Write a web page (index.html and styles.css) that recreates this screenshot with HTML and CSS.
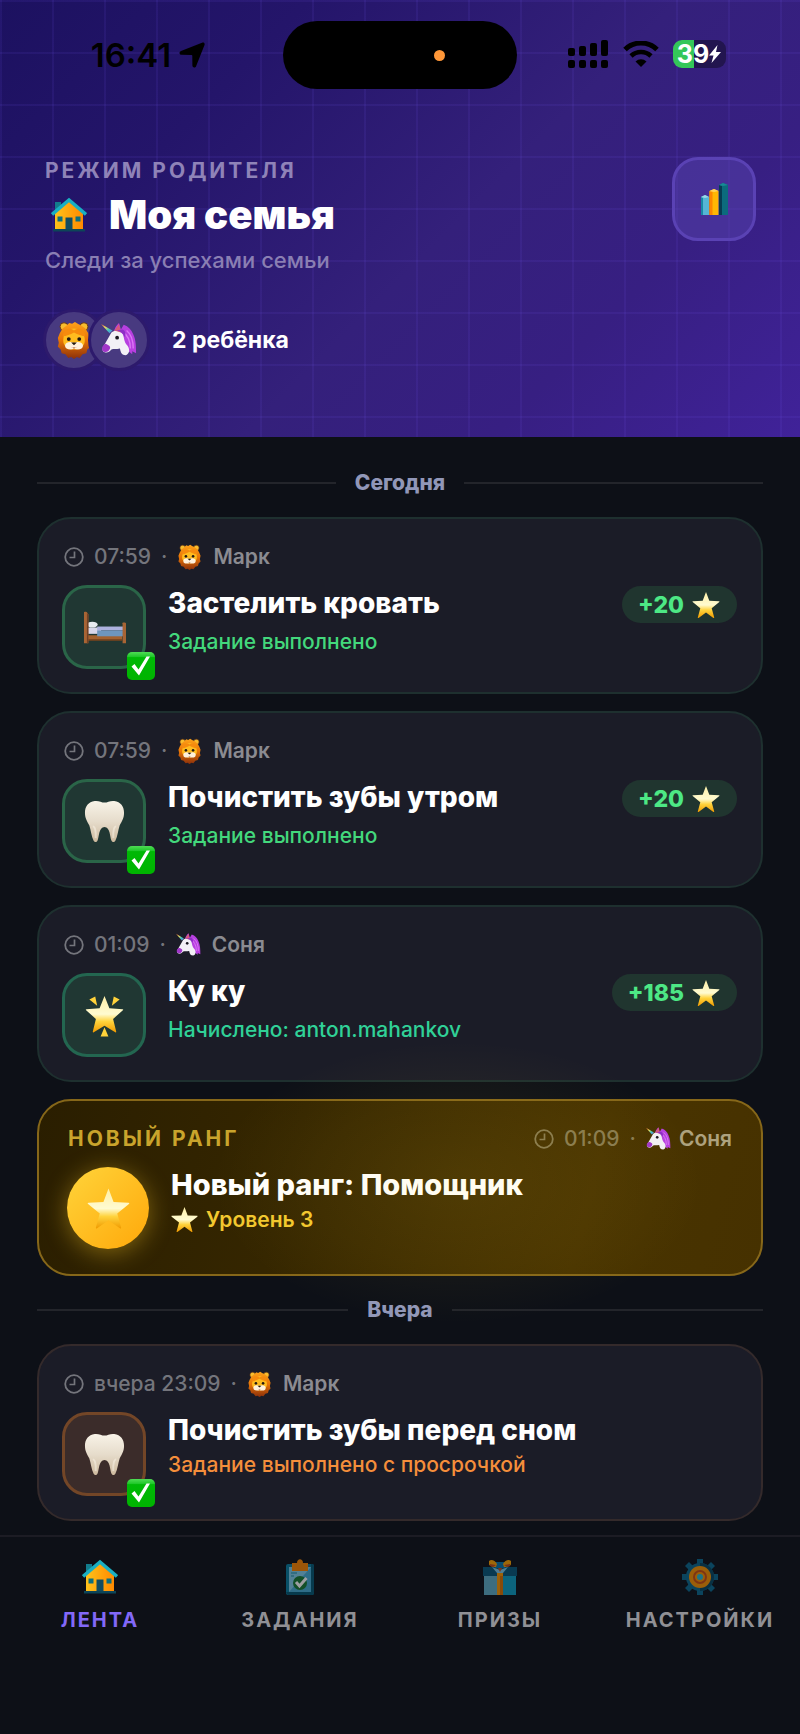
FILE: index.html
```html
<!DOCTYPE html>
<html lang="ru">
<head>
  <meta charset="UTF-8" />
  <meta name="viewport" content="width=device-width, initial-scale=1.0"/>
  <title>Моя семья</title>
  <link rel="stylesheet" href="styles.css">
</head>
<body>
  <svg class="sprite" aria-hidden="true">
    <defs>
      <linearGradient id="g-house" x1="0" y1="0" x2="1" y2="0">
        <stop offset="0" stop-color="#ffc21a"/><stop offset="1" stop-color="#ff8a00"/>
      </linearGradient>
      <linearGradient id="g-star" x1="0" y1="0" x2="0" y2="1">
        <stop offset="0" stop-color="#fff0a8"/><stop offset=".5" stop-color="#fffbd0"/><stop offset=".7" stop-color="#ffd33c"/><stop offset="1" stop-color="#f09a00"/>
      </linearGradient>
      <linearGradient id="g-tooth" x1="0" y1="0" x2="0" y2="1">
        <stop offset="0" stop-color="#f8f3e8"/><stop offset=".5" stop-color="#e6dccb"/><stop offset="1" stop-color="#cdb99d"/>
      </linearGradient>
      <linearGradient id="g-mane" x1="0" y1="0" x2="0" y2="1">
        <stop offset="0" stop-color="#ffa31a"/><stop offset=".5" stop-color="#e87506"/><stop offset="1" stop-color="#8a2f0b"/>
      </linearGradient>
      <linearGradient id="g-horn" x1="0" y1="0" x2="1" y2="1">
        <stop offset="0" stop-color="#e05a3c"/><stop offset=".35" stop-color="#f7dc5a"/><stop offset=".65" stop-color="#3fc8c0"/><stop offset="1" stop-color="#6a6ff0"/>
      </linearGradient>
      <linearGradient id="g-check" x1="0" y1="0" x2="0" y2="1">
        <stop offset="0" stop-color="#4fdc55"/><stop offset=".16" stop-color="#22c92c"/><stop offset=".2" stop-color="#00b806"/><stop offset="1" stop-color="#00b400"/>
      </linearGradient>
    </defs>

    <symbol id="house" viewBox="0 0 36 36">
      <path d="M4 5h6v8l-6 4z" fill="#127c8c"/>
      <path d="M4 16 18 3l14 13v16H4z" fill="url(#g-house)"/>
      <path d="M1 17.500 18 3l17 14.500" fill="none" stroke="#19afc2" stroke-width="3.600"/>
      <path d="M6.500 19.500h5v5h-5zM24.500 19.500h5v5h-5z" fill="#0c6f7e"/>
      <path d="M14.500 20.500h7V32h-7z" fill="#124c61"/>
      <path d="M2 32h32v2.500H2z" fill="#0d4558"/>
    </symbol>

    <symbol id="star" viewBox="0 0 28 28">
      <path d="M14 1 17.300 9.800l9.700.4c.6.100.7.500.3.900l-7.600 6.100 2.500 9.200c.1.500-.3.800-.8.500L14 21.600l-7.400 5.300c-.5.300-.9 0-.8-.5l2.500-9.200-7.600-6.100c-.4-.4-.3-.8.3-.9l9.700-.4z" fill="url(#g-star)"/>
    </symbol>

    <symbol id="glow-star" viewBox="0 0 40 44">
      <path d="M20 2 25 14.500l13.500 1c.7.100.9.700.3 1.200L28.800 25.500l3.200 13c.1.700-.4 1-1 .6L20 32.500 9 39.100c-.6.400-1.100.1-1-.6l3.200-13L1.200 16.700c-.6-.5-.4-1.100.3-1.200l13.500-1z" fill="url(#g-star)"/>
      <path d="M4.500 5.500 10.500 2.500l2 9.500zM35.500 5.500 29.500 2.500l-2 9.500zM20 34l4 9.500h-8z" fill="#ffd23a"/>
    </symbol>

    <symbol id="tooth" viewBox="0 0 42 44">
      <path d="M11 1c4-.6 7 1.600 10 1.600S27 .4 31 1c6.500 1 10 5.500 10 12 0 6-2.500 9-4.500 13-1.600 5-2 11-4.500 16-.8 1.500-3 1.500-3.800-.2C26.500 38 27 27.500 21 27.500S15.500 38 13.800 41.800c-.8 1.700-3 1.700-3.800.2-2.500-5-2.900-11-4.500-16C3.500 22 1 19 1 13 1 6.500 4.500 2 11 1z" fill="url(#g-tooth)"/>
      <path d="M9 27c2 0 3.500 4 3 12M33 27c-2 0-3.500 4-3 12" fill="none" stroke="#fffaf0" stroke-width="2" opacity=".45"/>
    </symbol>

    <symbol id="bed" viewBox="0 0 44 34">
      <path d="M5 25h35v5H5z" fill="#a4622f"/>
      <path d="M5 29h35v1.500H5z" fill="#70401d"/>
      <path d="M4.500 17h14v6.500h-14z" fill="#d8d7ea"/>
      <ellipse cx="9.500" cy="14" rx="5.500" ry="3" fill="#e8ebf0"/>
      <path d="M14.500 16H41v4H14.500z" fill="#adb1de"/>
      <path d="M14.500 20H41v6H14.500z" fill="#6e96bd"/>
      <path d="M1 1.500c0-.8 3-.8 3 0l1.500 2V33H1zM40 13c0-1.500 4-1.500 4 0v20h-3.500V13z" fill="#a86434"/>
      <path d="M4 2l1.500 1.500V33H4z" fill="#704025"/>
    </symbol>

    <symbol id="lion" viewBox="0 0 36 40">
      <circle cx="7.500" cy="6" r="4.200" fill="#f8bd2e" stroke="#673715" stroke-width="1"/>
      <circle cx="28.500" cy="6" r="4.200" fill="#f8bd2e" stroke="#673715" stroke-width="1"/>
      <path d="M10 5l3-3 3 1 3-2 3 2 4 2 4 3 3 5 2 5-1 5 1 4-3 3-1 4-4 1-3 4-3-1-3 2-3-2-3 1-3-4-4-1-1-4-3-3 1-4-1-5 2-5 3-5z" fill="url(#g-mane)"/>
      <path d="M7 17c1-6 5-9 11-9s10 3 11 9c1 5 0 8-3 10s-5 3-8 3-5-1-8-3-4-5-3-10z" fill="#ffbc1f"/>
      <path d="M6 16C7 9 13 6 18 10c5-4 11-1 12 6-4 0-8-2-12-4-4 2-8 4-12 4z" fill="#f68b0e"/>
      <ellipse cx="14" cy="26" rx="5.500" ry="4" fill="#fff1dc"/>
      <ellipse cx="22" cy="26" rx="5.500" ry="4" fill="#fff1dc"/>
      <circle cx="12.500" cy="19" r="2" fill="#211813"/>
      <circle cx="23.500" cy="19" r="2" fill="#211813"/>
      <path d="M15 22.500h6L18 25.500z" fill="#211813"/>
      <path d="M14.500 27c1.500 1.300 5.500 1.300 7 0L18 29z" fill="#94402b"/>
    </symbol>

    <symbol id="unicorn" viewBox="0 0 38 36">
      <path d="M14 8c1-4 3-6 5-8l2 7 3-5c5 2 8 5 10 10 3 6 3 14 3 20l-4-2v3l-5-4-8-8z" fill="#b73fe0"/>
      <path d="M22 9c5 3 9 9 9 18M27 8c5 4 7 11 7 19" fill="none" stroke="#d877f5" stroke-width="1.500"/>
      <path d="M11 10c4-3 9-2 12 2 2 5 1 8 5 12 3 4 2 9-2 10-4 0-5-2-6-7-4 1-7 0-9 1-2 2-4 4-7 3s-3-4-1-7l8-14z" fill="#f2f0f6"/>
      <path d="M4.500 22c-3 2-4 4-3 7C4 32 8 31 9.500 27 10.500 24 7 23 4.500 22z" fill="#a136c9"/>
      <path d="M0 1l12 7-3 3z" fill="url(#g-horn)"/>
      <path d="M14 8l5-7 2 9z" fill="#d4597a"/>
      <circle cx="17" cy="15.500" r="2" fill="#191720"/>
      <path d="M15 8c4 0 8 2 10 7 2-4 0-7-2-8z" fill="#8d2fc6"/>
    </symbol>

    <symbol id="check" viewBox="0 0 28 28">
      <rect width="28" height="28" rx="5" fill="url(#g-check)"/>
      <path d="M4.500 14.500 7.500 12l4 5.500L19.500 4.500h3.500L12 23.500z" fill="#fff"/>
    </symbol>

    <symbol id="clock" viewBox="0 0 20 20">
      <circle cx="10" cy="10" r="8.800" fill="none" stroke="currentColor" stroke-width="1.800"/>
      <path d="M10.500 4.500v6h-5" fill="none" stroke="currentColor" stroke-width="1.700"/>
    </symbol>
  </svg>

  <header class="hero">
    <div class="status-bar">
      <div class="status-left">
        <span class="time">16:41</span>
        <svg class="arrow" viewBox="0 0 26 26"><path d="M23 .8c1.800-.7 3.100.5 2.500 2.300L17.200 24c-.8 2.200-3.700 2-3.800-.4l-.1-9.600c0-.8-.3-1.100-1.100-1.100L2.500 12.800C.1 12.600-.2 9.800 2 8.900z" fill="#000"/></svg>
      </div>
      <div class="island"><span class="mic-dot"></span></div>
      <div class="status-right">
        <svg class="signal" viewBox="0 0 41 28">
          <rect x="0" y="8" width="7" height="8" rx="2"/><rect x="11" y="6" width="7" height="10" rx="2"/><rect x="22" y="3" width="7" height="13" rx="2"/><rect x="33" y="0" width="7" height="16" rx="2"/>
          <rect x="0" y="20" width="7" height="8" rx="2"/><rect x="11" y="20" width="7" height="8" rx="2"/><rect x="22" y="20" width="7" height="8" rx="2"/><rect x="33" y="20" width="7" height="8" rx="2"/>
        </svg>
        <svg class="wifi" viewBox="0 0 36 26">
          <path d="M2 8.500a23 23 0 0 1 32 0" fill="none" stroke="#000" stroke-width="5"/>
          <path d="M8 15a14.500 14.500 0 0 1 20 0" fill="none" stroke="#000" stroke-width="4.600"/>
          <path d="M12.500 20.500a8 8 0 0 1 11 0L18 26z"/>
        </svg>
        <div class="battery">
          <span class="battery-level">39</span>
          <svg class="bolt" viewBox="0 0 12 18"><path d="M8.500 0 0 10.500h4.500L2.500 18 12 7H7z" fill="#fff"/></svg>
        </div>
      </div>
    </div>

    <div class="hero-content">
      <div>
        <p class="eyebrow">РЕЖИМ РОДИТЕЛЯ</p>
        <h1><svg class="icon-36"><use href="#house"/></svg>Моя семья</h1>
        <p class="hero-sub">Следи за успехами семьи</p>
        <div class="kids">
          <span class="avatar"><svg class="avatar-icon"><use href="#lion"/></svg></span>
          <span class="avatar"><svg class="avatar-icon"><use href="#unicorn"/></svg></span>
          <span class="kids-count">2 ребёнка</span>
        </div>
      </div>
      <button type="button" class="stats-btn" aria-label="Статистика">
        <svg class="stats-icon" viewBox="0 0 28 33">
          <path d="M1 14l4-2 4 2v18H1z" fill="#55b5d5"/><path d="M1 14l2 1v17H1z" fill="#178aa5"/><path d="M1 14l4-2 4 2-4 1z" fill="#9bd7e5"/>
          <path d="M9.500 8l4.500-2 4.500 2v24h-9z" fill="#ffb703"/><path d="M9.500 8l3 1v23h-3z" fill="#fb8500"/><path d="M9.500 8l4.500-2 4.500 2-4.500 1z" fill="#ffd35c"/>
          <path d="M19 2l4-2 5 2v30h-9z" fill="#0c6b7d"/><path d="M19 2l3 1v29h-3z" fill="#073b51"/><path d="M19 2l4-2 5 2-5 1z" fill="#178a94"/>
        </svg>
      </button>
    </div>
  </header>

  <main class="feed">
    <h2 class="day">Сегодня</h2>

    <article class="card done">
      <div class="meta">
        <svg class="clock"><use href="#clock"/></svg><span>07:59</span><span class="dot">·</span>
        <svg class="meta-icon"><use href="#lion"/></svg><b>Марк</b>
      </div>
      <div class="card-row">
        <div class="tile">
          <svg class="tile-icon"><use href="#bed"/></svg>
          <svg class="check"><use href="#check"/></svg>
        </div>
        <div class="card-body">
          <div class="title-row">
            <h3>Застелить кровать</h3>
            <span class="points">+20 <svg class="points-star"><use href="#star"/></svg></span>
          </div>
          <p class="note">Задание выполнено</p>
        </div>
      </div>
    </article>

    <article class="card done">
      <div class="meta">
        <svg class="clock"><use href="#clock"/></svg><span>07:59</span><span class="dot">·</span>
        <svg class="meta-icon"><use href="#lion"/></svg><b>Марк</b>
      </div>
      <div class="card-row">
        <div class="tile">
          <svg class="tile-icon"><use href="#tooth"/></svg>
          <svg class="check"><use href="#check"/></svg>
        </div>
        <div class="card-body">
          <div class="title-row">
            <h3>Почистить зубы утром</h3>
            <span class="points">+20 <svg class="points-star"><use href="#star"/></svg></span>
          </div>
          <p class="note">Задание выполнено</p>
        </div>
      </div>
    </article>

    <article class="card bonus">
      <div class="meta">
        <svg class="clock"><use href="#clock"/></svg><span>01:09</span><span class="dot">·</span>
        <svg class="meta-icon"><use href="#unicorn"/></svg><b>Соня</b>
      </div>
      <div class="card-row">
        <div class="tile">
          <svg class="tile-icon"><use href="#glow-star"/></svg>
        </div>
        <div class="card-body">
          <div class="title-row">
            <h3>Ку ку</h3>
            <span class="points">+185 <svg class="points-star"><use href="#star"/></svg></span>
          </div>
          <p class="note">Начислено: anton.mahankov</p>
        </div>
      </div>
    </article>

    <article class="card rank">
      <div class="rank-top">
        <p class="rank-label">НОВЫЙ РАНГ</p>
        <div class="meta">
          <svg class="clock"><use href="#clock"/></svg><span>01:09</span><span class="dot">·</span>
          <svg class="meta-icon"><use href="#unicorn"/></svg><b>Соня</b>
        </div>
      </div>
      <div class="card-row">
        <div class="medal"><svg class="tile-icon"><use href="#star"/></svg></div>
        <div class="card-body">
          <h3>Новый ранг: Помощник</h3>
          <p class="note"><svg class="note-star"><use href="#star"/></svg>Уровень 3</p>
        </div>
      </div>
    </article>

    <h2 class="day">Вчера</h2>

    <article class="card late">
      <div class="meta">
        <svg class="clock"><use href="#clock"/></svg><span>вчера 23:09</span><span class="dot">·</span>
        <svg class="meta-icon"><use href="#lion"/></svg><b>Марк</b>
      </div>
      <div class="card-row">
        <div class="tile">
          <svg class="tile-icon"><use href="#tooth"/></svg>
          <svg class="check"><use href="#check"/></svg>
        </div>
        <div class="card-body">
          <h3>Почистить зубы перед сном</h3>
          <p class="note">Задание выполнено с просрочкой</p>
        </div>
      </div>
    </article>
  </main>

  <nav class="tabs">
    <a href="#feed" class="tab active">
      <svg class="icon-36"><use href="#house"/></svg>
      <span>ЛЕНТА</span>
    </a>
    <a href="#tasks" class="tab">
      <svg class="icon-36" viewBox="0 0 36 36">
        <rect x="4" y="5" width="28" height="31" rx="2" fill="#087b9e"/>
        <path d="M29 5h1a2 2 0 0 1 2 2v27a2 2 0 0 1-2 2H6l-2-3h25z" fill="#045672"/>
        <rect x="7" y="8" width="22" height="25" fill="#83cdeb"/>
        <path d="M29 8v25H7z" fill="#46abd4"/>
        <path d="M9 14h6M9 17h3" stroke="#168da7"/>
        <path d="M10 4h5c0-5 6-5 6 0h5v8H10z" fill="#fb8500"/>
        <circle cx="18" cy="24" r="7" fill="#177a34"/>
        <path d="M14 23l3.500 4 7-8" fill="none" stroke="#fff" stroke-width="3"/>
      </svg>
      <span>ЗАДАНИЯ</span>
    </a>
    <a href="#prizes" class="tab">
      <svg class="icon-36" viewBox="0 0 36 36">
        <path d="M2 16h32v20H2z" fill="#5dabc5"/>
        <path d="M21 16h13v20H21z" fill="#0c9dc1"/>
        <path d="M1 8h34v9H1z" fill="#075779"/>
        <path d="M13 3h10v6H13z" fill="#0875ab"/>
        <path d="M10 8l8 3 8-3-5 6h-6z" fill="#7bc6e4"/>
        <path d="M15 14h6v22h-6z" fill="#fb9700"/><path d="M18 17h3v19h-3z" fill="#db7100"/>
        <path d="M7 2c2-2 6-1 8 3l-1 3c-4 0-7-1-7-3zM29 2c-2-2-6-1-8 3l1 3c4 0 7-1 7-3z" fill="#ffa300"/>
        <path d="M8 5l6 1-3 2-3-1zM28 5l-6 1 3 2 3-1zM16 9h4l-2 4z" fill="#c54a18"/>
      </svg>
      <span>ПРИЗЫ</span>
    </a>
    <a href="#settings" class="tab">
      <svg class="icon-36" viewBox="0 0 36 36">
        <path d="M15 0h6v5h-6zM15 31h6v5h-6zM0 15h5v6H0zM31 15h5v6h-5zM3 7l4-4 4 4-4 4zM25 7l4-4 4 4-4 4zM3 29l4-4 4 4-4 4zM25 29l4-4 4 4-4 4z" fill="#0a688d"/>
        <circle cx="18" cy="18" r="14" fill="#0a688d"/>
        <path d="M18 4a14 14 0 0 1 0 28z" fill="#064660"/>
        <circle cx="18" cy="18" r="11" fill="#f89300"/>
        <circle cx="18" cy="18" r="6" fill="#f89300" stroke="#c94d12" stroke-width="2"/>
        <circle cx="18" cy="18" r="3" fill="#28b7d4"/>
      </svg>
      <span>НАСТРОЙКИ</span>
    </a>
  </nav>
</body>
</html>
```
FILE: styles.css
```css
* {
  box-sizing: border-box;
  margin: 0;
  padding: 0;
}

body {
  background-color: #0d1017;
  color: #ffffff;
  font-family: Inter, 'Liberation Sans', sans-serif;
  font-size: 21px;
  line-height: 24px;
  min-height: 100vh;
  display: flex;
  flex-direction: column;
}

svg {
  display: block;
  flex-shrink: 0;
}

.sprite {
  position: absolute;
  width: 0;
  height: 0;
}

.icon-36 {
  width: 36px;
  height: 36px;
}

/* header */
.hero {
  background-image:
    linear-gradient(rgba(124, 92, 255, 0.09) 2px, transparent 2px),
    linear-gradient(90deg, rgba(124, 92, 255, 0.09) 2px, transparent 2px),
    linear-gradient(135deg, #1c1160 0%, #24156a 25%, #34207b 55%, #371f82 75%, #402299 100%);
  background-size: 52px 52px, 52px 52px, 100% 100%;
}

.status-bar {
  display: grid;
  grid-template-columns: 1fr 234px 1fr;
  align-items: center;
  padding-top: 21px;
}

.status-left,
.status-right {
  display: flex;
  align-items: center;
  justify-content: center;
}

.status-left {
  gap: 8px;
  padding-left: 13px;
}

.status-right {
  gap: 14px;
  padding-right: 24px;
  padding-bottom: 2px;
}

.time {
  color: #000000;
  font-size: 33px;
  font-weight: 600;
}

.arrow {
  width: 26px;
  height: 26px;
}

.island {
  display: flex;
  align-items: center;
  justify-content: flex-end;
  height: 68px;
  padding-right: 72px;
  border-radius: 34px;
  background-color: #000000;
}

.mic-dot {
  width: 11px;
  height: 11px;
  border-radius: 50%;
  background-color: #ff9738;
}

.signal {
  width: 41px;
  height: 28px;
}

.wifi {
  width: 36px;
  height: 26px;
}

.battery {
  display: flex;
  align-items: center;
  justify-content: center;
  width: 53px;
  height: 28px;
  border-radius: 9px;
  background: linear-gradient(90deg, #34c759 39%, #22154f 39%);
}

.battery-level {
  font-size: 25px;
  font-weight: 700;
}

.bolt {
  width: 12px;
  height: 18px;
}

.hero-content {
  display: flex;
  align-items: flex-start;
  justify-content: space-between;
  padding: 68px 44px 66px 45px;
}

.eyebrow {
  color: #8f83b8;
  font-weight: 700;
  line-height: 28px;
  letter-spacing: 3px;
}

h1 {
  display: flex;
  align-items: center;
  gap: 22px;
  margin-top: 5px;
  padding-left: 6px;
  font-size: 40px;
  font-weight: 900;
  line-height: 50px;
}

.hero-sub {
  margin-top: 6px;
  color: #8a7fb3;
  font-size: 22px;
  font-weight: 500;
  line-height: 28px;
}

.kids {
  display: flex;
  align-items: center;
  margin-top: 35px;
}

.avatar {
  display: flex;
  align-items: center;
  justify-content: center;
  width: 62px;
  height: 62px;
  margin-left: -2px;
  border: 3px solid #2d1a6c;
  border-radius: 50%;
  background-color: #483a80;
}

.avatar + .avatar {
  margin-left: -17px;
}

.avatar-icon {
  width: 36px;
  height: 38px;
}

.kids-count {
  margin-left: 22px;
  font-size: 23px;
  font-weight: 700;
}

.stats-btn {
  display: flex;
  align-items: center;
  justify-content: center;
  width: 84px;
  height: 84px;
  border: 3px solid #5a42b4;
  border-radius: 26px;
  background-color: rgba(92, 70, 180, 0.45);
  cursor: pointer;
}

.stats-icon {
  width: 28px;
  height: 33px;
}

/* feed */
.feed {
  flex: 1;
  padding: 34px 37px 14px;
}

.day {
  display: flex;
  align-items: center;
  gap: 19px;
  margin-bottom: 22px;
  color: #9197b8;
  font-size: 21px;
  font-weight: 800;
}

.day::before,
.day::after {
  content: "";
  flex: 1;
  height: 2px;
  background-color: #23252b;
}

.card + .day {
  margin-top: 22px;
}

.card {
  padding: 24px 24px 23px 23px;
  border: 2px solid #1e302f;
  border-radius: 34px;
  background-color: #1b1c27;
}

.card + .card {
  margin-top: 17px;
}

.meta {
  display: flex;
  align-items: center;
  height: 28px;
  padding-left: 2px;
  color: #74757c;
  font-weight: 500;
}

.meta b {
  margin-left: 11px;
  color: #8b8b91;
  font-weight: 600;
}

.clock {
  width: 20px;
  height: 20px;
  margin-right: 10px;
}

.dot {
  margin: 0 10px;
}

.meta-icon {
  width: 25px;
  height: 26px;
}

.card-row {
  display: flex;
  align-items: flex-start;
  gap: 22px;
  margin-top: 14px;
}

.tile {
  position: relative;
  display: flex;
  align-items: center;
  justify-content: center;
  width: 84px;
  height: 84px;
  border: 3px solid #2a6548;
  border-radius: 25px;
  background-color: #203733;
}

.tile-icon {
  width: 43px;
  height: 43px;
}

.check {
  position: absolute;
  right: -12px;
  bottom: -14px;
  width: 28px;
  height: 28px;
}

.card-body {
  flex: 1;
  padding-top: 2px;
}

.title-row {
  display: flex;
  align-items: flex-start;
  justify-content: space-between;
}

h3 {
  font-size: 28px;
  font-weight: 800;
  line-height: 32px;
}

.points {
  display: flex;
  align-items: center;
  gap: 8px;
  height: 37px;
  padding: 0 17px 0 16px;
  border-radius: 19px;
  background-color: #20352f;
  color: #4de885;
  font-size: 23px;
  font-weight: 800;
}

.points-star {
  width: 28px;
  height: 28px;
}

.note {
  display: flex;
  align-items: center;
  gap: 8px;
  margin-top: 7px;
  color: #43d87c;
  font-weight: 500;
}

.note-star {
  width: 27px;
  height: 27px;
}

.title-row .points {
  margin-top: -1px;
}

.bonus .tile {
  border-color: #236650;
}

.bonus .note {
  color: #30d197;
}

.late {
  border-color: #342a2b;
}

.late .tile {
  border-color: #734627;
  background-color: #3b2c2a;
}

.late .note {
  color: #f58e3b;
}

/* rank card */
.rank {
  position: relative;
  border-color: #866719;
  background: linear-gradient(105deg, #2a1e00 0%, #352600 35%, #493400 75%, #463100 100%);
}

.rank::after {
  content: "";
  position: absolute;
  left: 24%;
  right: 8%;
  top: -60px;
  bottom: -50px;
  background: radial-gradient(closest-side, rgba(255, 215, 50, 0.08), rgba(255, 215, 50, 0.04) 60%, transparent);
  pointer-events: none;
}

.rank-top {
  display: flex;
  align-items: center;
  justify-content: space-between;
  padding: 0 5px 0 6px;
}

.rank-label {
  color: #c9a42c;
  font-weight: 700;
  letter-spacing: 3px;
}

.rank .meta {
  color: #877a50;
}

.rank .meta b {
  margin-left: 8px;
  color: #ada27e;
}

.rank .card-row {
  padding-left: 5px;
}

.medal {
  display: flex;
  align-items: center;
  justify-content: center;
  width: 82px;
  height: 82px;
  margin-bottom: 2px;
  border-radius: 50%;
  background: linear-gradient(135deg, #ffd43a, #ffa80a);
  box-shadow: 0 4px 24px rgba(255, 205, 40, 0.4);
}

.rank h3 {
  font-size: 29px;
}

.rank .note {
  margin-top: 5px;
  color: #f2c82f;
  font-weight: 600;
}

/* bottom tabs */
.tabs {
  display: grid;
  grid-template-columns: repeat(4, 1fr);
  padding: 22px 0 102px;
  border-top: 2px solid #1c1c24;
  background-color: #0d1017;
  font-size: 20px;
}

.tab {
  display: flex;
  flex-direction: column;
  align-items: center;
  gap: 13px;
  color: #909095;
  font-weight: 700;
  letter-spacing: 2px;
  text-decoration: none;
}

.tab svg {
  opacity: 0.6;
}

.tab.active {
  color: #8268f8;
}

.tab.active svg {
  opacity: 1;
}
```
